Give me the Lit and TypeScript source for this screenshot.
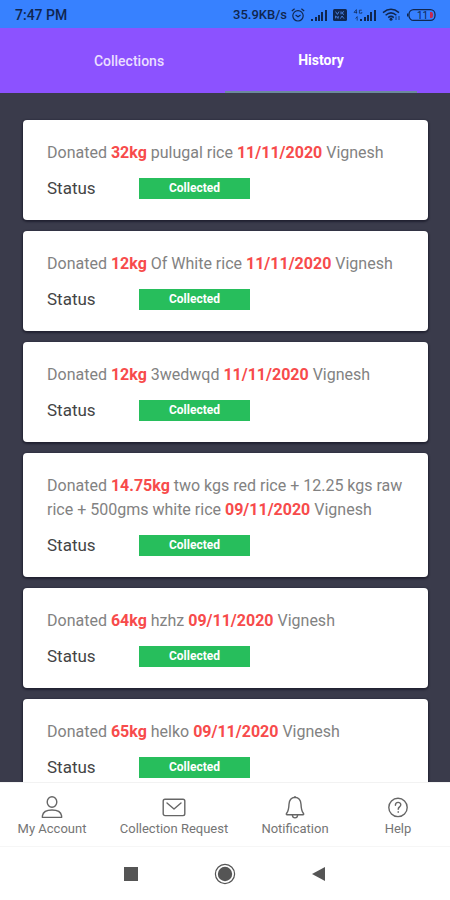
import { LitElement, html, css, svg } from "lit";
import { customElement, property } from "lit/decorators.js";

interface Donation {
  amount: string;
  item: string;
  date: string;
  donor: string;
}

const donations: Donation[] = [
  { amount: "32kg", item: "pulugal rice", date: "11/11/2020", donor: "Vignesh" },
  { amount: "12kg", item: "Of White rice", date: "11/11/2020", donor: "Vignesh" },
  { amount: "12kg", item: "3wedwqd", date: "11/11/2020", donor: "Vignesh" },
  {
    amount: "14.75kg",
    item: "two kgs red rice + 12.25 kgs raw rice + 500gms white rice",
    date: "09/11/2020",
    donor: "Vignesh",
  },
  { amount: "64kg", item: "hzhz", date: "09/11/2020", donor: "Vignesh" },
  { amount: "65kg", item: "helko", date: "09/11/2020", donor: "Vignesh" },
];

const signalBars = svg`
  <rect x="0" y="10" width="2" height="2" />
  <rect x="4" y="8" width="2" height="4" />
  <rect x="7" y="6" width="2" height="6" />
  <rect x="10" y="3" width="2" height="9" />
  <rect x="14" y="1" width="2" height="11" />`;

@customElement("status-bar")
export class StatusBar extends LitElement {
  static styles = css`
    :host {
      display: flex;
      align-items: center;
      justify-content: space-between;
      height: 28px;
      padding: 1px 14px 0 15px;
      box-sizing: border-box;
      background: #3781ff;
      color: #10264f;
      font-size: 13px;
      font-weight: 500;
    }
    .time {
      font-size: 14px;
    }
    .icons {
      display: flex;
      align-items: center;
      gap: 6px;
    }
    .speed {
      margin-right: -2px;
    }
    svg {
      display: block;
      fill: currentColor;
    }
    .line {
      fill: none;
      stroke: currentColor;
    }
  `;

  render() {
    return html`
      <span class="time">7:47 PM</span>
      <div class="icons">
        <span class="speed">35.9KB/s</span>
        <svg width="14" height="14" viewBox="0 0 14 14" aria-label="Alarm">
          <g class="line" stroke-width="1.2">
            <circle cx="7" cy="7.8" r="5.2" />
            <path d="M4.6 7 7 8.8 9.6 7M.8 3 3.6.8M13.2 3 10.4.8" />
          </g>
        </svg>
        <svg width="16" height="12" viewBox="0 0 16 12" aria-label="Signal">${signalBars}</svg>
        <svg width="14" height="12" viewBox="0 0 14 12" aria-label="Voice over network">
          <rect width="14" height="12" rx="1.5" />
          <path
            d="M2.6 2.6 4.4 5.4 6 2.6M8 2.4v3M11 2.4 8.6 4 11 5.6M2.6 9.4V7l2.6 2.4V7M7.4 9.6 9 7l2 2.6"
            fill="none"
            stroke="#4c86e8"
            stroke-width=".9"
          />
        </svg>
        <svg width="23" height="12" viewBox="0 0 23 12" aria-label="4G signal">
          <path
            class="line"
            stroke-width=".7"
            d="M3.4 4.6V.6L1 3.4h3.2M8.8 1.2H6.4v3h2.4V3M2.6 9.600l1.600-2v4"
          />
          <g transform="translate(7 0)">${signalBars}</g>
        </svg>
        <svg width="19" height="13" viewBox="0 0 19 13" aria-label="Wi-Fi">
          <g class="line" stroke-width="1.5">
            <path d="M1 4.6Q9 -2 17 4.6M3.6 7.2Q9 2.6 14.4 7.2M6.2 9.6Q9 7.2 11.8 9.6" />
            <path d="M14 12V8.4M17 8v4" stroke-width=".8" />
          </g>
          <circle cx="9" cy="11.2" r="1.5" />
        </svg>
        <svg width="29" height="12" viewBox="0 0 29 12" aria-label="Battery 11 percent">
          <rect class="line" x="2" y=".6" width="26" height="10.8" rx="4.600" stroke-width="1.2" />
          <path d="M0 4.4h1.4v3.2H0z" />
          <path d="M23 3h1.4q1.6 0 1.6 3t-1.6 3H23z" fill="#c52b52" />
          <text x="10" y="10" font-size="10" font-weight="400">11</text>
        </svg>
      </div>
    `;
  }
}

@customElement("donation-card")
export class DonationCard extends LitElement {
  @property({ attribute: false }) donation!: Donation;

  static styles = css`
    :host {
      display: block;
      flex: none;
      box-sizing: border-box;
      padding: 21px 23px 20px 24px;
      background: #fff;
      border-radius: 4px;
      box-shadow: 0 1px 2px 1px rgba(16, 16, 32, 0.6);
    }
    .summary {
      margin: 0;
      font-size: 16px;
      line-height: 24px;
      color: #828282;
    }
    .accent {
      font-weight: 700;
      color: #f74b4b;
    }
    .status {
      display: grid;
      grid-template-columns: 92px 111px;
      align-items: center;
      height: 24px;
      margin-top: 11px;
    }
    .label {
      font-size: 17px;
      color: #444;
    }
    .badge {
      height: 21px;
      line-height: 20px;
      background: #27be5c;
      color: #fff;
      font-size: 12px;
      font-weight: 700;
      text-align: center;
    }
  `;

  render() {
    const { amount, item, date, donor } = this.donation;
    return html`
      <p class="summary">
        Donated <span class="accent">${amount}</span> ${item}
        <span class="accent">${date}</span> ${donor}
      </p>
      <div class="status">
        <span class="label">Status</span>
        <span class="badge">Collected</span>
      </div>
    `;
  }
}

@customElement("app-root")
export class AppRoot extends LitElement {
  static styles = css`
    :host {
      display: flex;
      flex-direction: column;
      height: 100vh;
      background: #3a3b4b;
      font-family: Roboto, "Liberation Sans", sans-serif;
    }
    button {
      margin: 0;
      padding: 0;
      border: 0;
      background: none;
      font: inherit;
      color: inherit;
    }
    svg {
      display: block;
    }
    .tabs {
      display: flex;
      flex: none;
      height: 65px;
      padding: 0 33px;
      background: #8c52ff;
    }
    .tabs button {
      flex: 1;
      font-size: 14px;
      font-weight: 500;
      color: #eadfff;
    }
    .tabs .active {
      border-bottom: 2px solid #6c8b9c;
      font-weight: 700;
      color: #fff;
    }
    .list {
      display: flex;
      flex: 1;
      flex-direction: column;
      gap: 11px;
      min-height: 0;
      padding: 27px 22px 0 23px;
      overflow: hidden;
    }
    .menu {
      display: grid;
      flex: none;
      grid-template-columns: 104fr 140fr 102fr 104fr;
      align-items: center;
      height: 65px;
      padding-top: 1px;
      border-top: 1px solid #f2f2f2;
      border-bottom: 1px solid #f6f6f6;
      box-sizing: border-box;
      background: #fff;
      color: #757575;
      font-size: 13px;
    }
    .menu button {
      display: flex;
      flex-direction: column;
      align-items: center;
      gap: 2px;
    }
    .menu svg {
      fill: none;
      stroke: #666;
      stroke-width: 1.4;
      stroke-linejoin: round;
      stroke-linecap: round;
    }
    .system {
      display: flex;
      flex: none;
      align-items: center;
      justify-content: center;
      gap: 73px;
      height: 53px;
      background: #fff;
      color: #555;
    }
    .system svg {
      fill: currentColor;
    }
  `;

  render() {
    return html`
      <status-bar></status-bar>
      <nav class="tabs">
        <button>Collections</button>
        <button class="active">History</button>
      </nav>
      <main class="list">
        ${donations.map((d) => html`<donation-card .donation=${d}></donation-card>`)}
      </main>
      <nav class="menu">
        <button>
          <svg width="24" height="24" viewBox="0 0 24 24">
            <ellipse cx="12" cy="7" rx="4.8" ry="5.2" />
            <path d="M2.4 22.4v-1.6Q3.4 15 12 15t9.6 5.8v1.6z" />
          </svg>
          My Account
        </button>
        <button>
          <svg width="24" height="24" viewBox="0 0 24 24">
            <rect x="1.2" y="4.2" width="21.6" height="16.4" rx="1.8" />
            <path d="M5 8l7 6 7-6" />
          </svg>
          Collection Request
        </button>
        <button>
          <svg width="24" height="24" viewBox="0 0 24 24">
            <path
              d="M12 2.2c-4 .4-5.8 3.4-6 7-.2 5-.8 7-2.2 8.800-.8 1-.6 1.800.4 1.800h15.600c1 0 1.200-.8.4-1.800-1.400-1.800-2-3.800-2.200-8.800-.2-3.600-2-6.600-6-7z"
            />
            <path d="M9.400 20c.2 3.800 5 3.800 5.200 0M12 1.600v.6" />
          </svg>
          Notification
        </button>
        <button>
          <svg width="24" height="24" viewBox="0 0 24 24">
            <circle cx="12" cy="12.400" r="9.200" />
            <path d="M9.400 10.200c0-3.800 5.400-3.600 5.400-.4 0 2.200-2.600 2-2.600 4.400M12.200 16.800v.4" />
          </svg>
          Help
        </button>
      </nav>
      <nav class="system">
        <button aria-label="Recent apps">
          <svg width="20" height="20" viewBox="0 0 20 20"><path d="M3 3h14v14H3z" /></svg>
        </button>
        <button aria-label="Home">
          <svg width="22" height="22" viewBox="0 0 22 22">
            <circle cx="11" cy="11" r="9.600" fill="none" stroke="currentColor" stroke-width="1.200" />
            <circle cx="11" cy="11" r="7.200" />
          </svg>
        </button>
        <button aria-label="Back">
          <svg width="20" height="20" viewBox="0 0 20 20"><path d="M3 10 16 3v14z" /></svg>
        </button>
      </nav>
    `;
  }
}
